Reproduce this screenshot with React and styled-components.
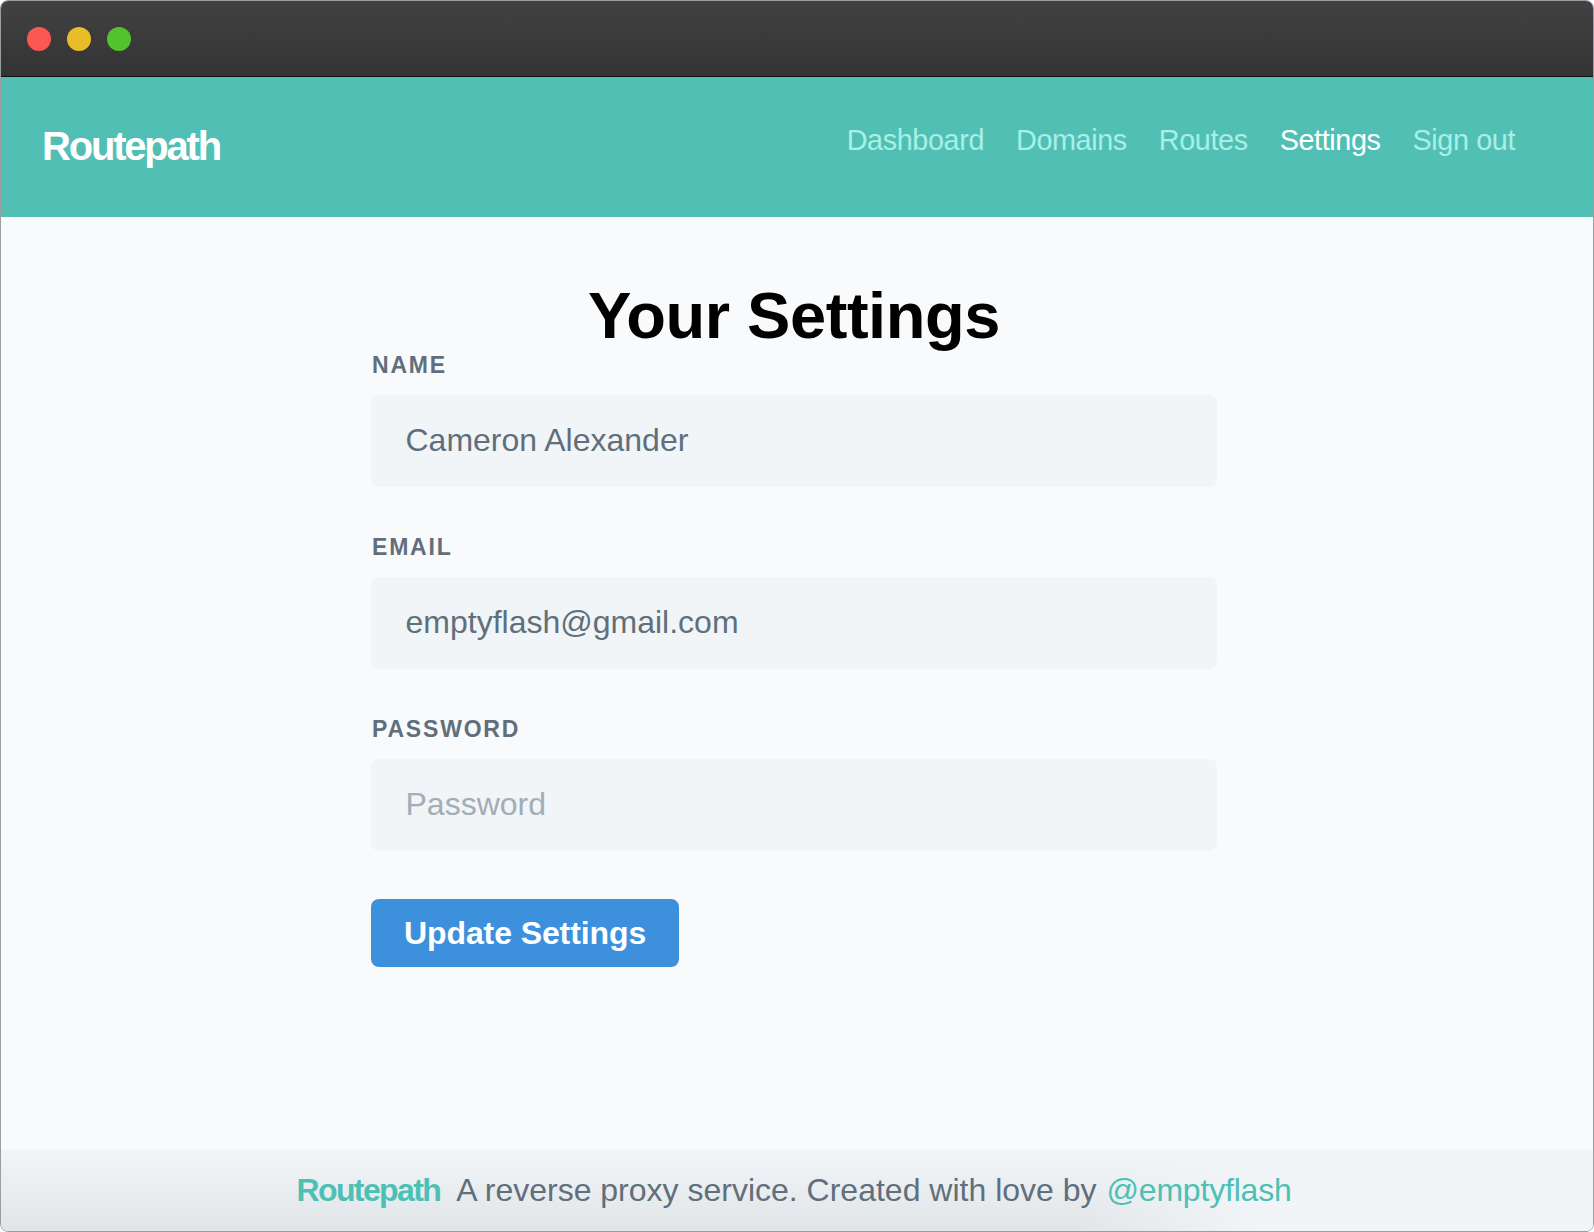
import React from "react";
import styled, { createGlobalStyle } from "styled-components";

const GlobalStyle = createGlobalStyle`
  html, body {
    margin: 0;
    padding: 0;
    background: #ffffff;
  }
  * {
    box-sizing: border-box;
  }
`;

function App() {
  return (
    <>
      <GlobalStyle />
      <Window>
        <TitleBar>
          <Dot color="#fc5753" />
          <Dot color="#e8bd29" />
          <Dot color="#53c22c" />
        </TitleBar>
        <Header>
          <Logo>Routepath</Logo>
          <Nav>
            <NavLink>Dashboard</NavLink>
            <NavLink>Domains</NavLink>
            <NavLink>Routes</NavLink>
            <NavLink $active>Settings</NavLink>
            <NavLink>Sign out</NavLink>
          </Nav>
        </Header>
        <Main>
          <Title>Your Settings</Title>
          <Form>
            <Field>
              <Label>Name</Label>
              <Input defaultValue="Cameron Alexander" />
            </Field>
            <Field>
              <Label>Email</Label>
              <Input defaultValue="emptyflash@gmail.com" />
            </Field>
            <Field>
              <Label>Password</Label>
              <Input type="password" placeholder="Password" />
            </Field>
            <SubmitButton type="button">Update Settings</SubmitButton>
          </Form>
        </Main>
        <Footer>
          <FooterBrand>Routepath</FooterBrand>
          <FooterText>A reverse proxy service. Created with love by</FooterText>
          <FooterLink>@emptyflash</FooterLink>
        </Footer>
      </Window>
    </>
  );
}

const Window = styled.div`
  display: flex;
  flex-direction: column;
  width: 1594px;
  height: 1232px;
  overflow: hidden;
  background: #f8fafc;
  border: 1px solid #9a9ea3;
  border-radius: 8px;
  font-family: "Liberation Sans", Arial, sans-serif;
`;

const TitleBar = styled.div`
  display: flex;
  align-items: center;
  gap: 16px;
  flex: none;
  height: 76px;
  padding: 0 0 0 26px;
  background: linear-gradient(#424242, #333333);
  border-bottom: 1px solid #111111;
`;

const Dot = styled.span`
  width: 24px;
  height: 24px;
  border-radius: 50%;
  background: ${(p) => p.color};
`;

const Header = styled.header`
  display: flex;
  justify-content: space-between;
  align-items: center;
  flex: none;
  height: 140px;
  padding: 0 78px 0 41px;
  background: #52bfb5;
`;

const Logo = styled.div`
  margin-top: -2px;
  color: #ffffff;
  font-size: 40px;
  font-weight: 700;
  letter-spacing: -2.2px;
`;

const Nav = styled.nav`
  display: flex;
  gap: 32px;
  margin-bottom: 14px;
`;

const NavLink = styled.a`
  color: ${(p) => (p.$active ? "#ffffff" : "#a6f0e6")};
  font-size: 28.8px;
  letter-spacing: -0.4px;
`;

const Main = styled.main`
  display: flex;
  flex-direction: column;
  align-items: center;
  flex: 1;
  padding: 63px 6px 0 0;
`;

const Title = styled.h1`
  margin: 0;
  color: #000000;
  font-size: 65px;
  font-weight: 700;
  line-height: 72px;
  letter-spacing: -0.45px;
`;

const Form = styled.form`
  width: 846px;
`;

const Field = styled.div`
  margin-bottom: 47px;
`;

const Label = styled.label`
  display: block;
  margin-bottom: 17px;
  padding-left: 1px;
  color: #606f7b;
  font-size: 23px;
  font-weight: 700;
  line-height: 26px;
  letter-spacing: 1.8px;
  text-transform: uppercase;
`;

const Input = styled.input`
  display: block;
  width: 100%;
  height: 92px;
  padding: 0 34px 2px 34.5px;
  background: #f1f5f8;
  border: none;
  border-radius: 8px;
  color: #606f7b;
  font-family: inherit;
  font-size: 32px;
  outline: none;

  &::placeholder {
    color: #a3adb5;
    opacity: 1;
  }
`;

const SubmitButton = styled.button`
  display: block;
  height: 68px;
  margin-top: 48px;
  padding: 0 33px;
  background: #3d90dc;
  border: none;
  border-radius: 8px;
  color: #ffffff;
  font-family: inherit;
  font-size: 32px;
  font-weight: 700;
  letter-spacing: -0.1px;
`;

const Footer = styled.footer`
  display: flex;
  justify-content: center;
  align-items: center;
  gap: 16px;
  flex: none;
  height: 82px;
  padding-right: 6px;
  background:
    linear-gradient(to right, transparent 1080px, #f1f5f8 1260px),
    linear-gradient(#f1f5f8, #e2e5e8);
  font-size: 32px;
`;

const FooterBrand = styled.span`
  color: #4dc0b5;
  font-weight: 700;
  letter-spacing: -1.6px;
`;

const FooterText = styled.span`
  color: #606f7b;
`;

const FooterLink = styled.a`
  margin-left: -6px;
  color: #4dc0b5;
  letter-spacing: -0.2px;
`;

export default App;
